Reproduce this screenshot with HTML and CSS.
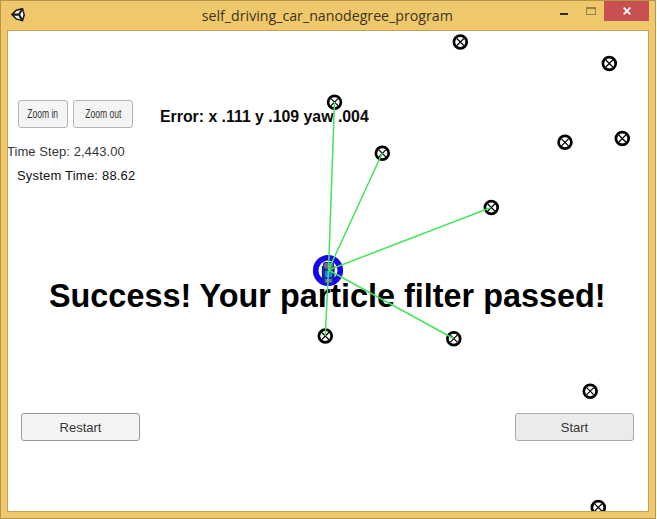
FILE: index.html
```html
<!DOCTYPE html>
<html lang="en">
<head>
<meta charset="utf-8">
<title>self_driving_car_nanodegree_program</title>
<link rel="stylesheet" href="styles.css">
</head>
<body>
<div class="window">
  <header class="titlebar">
    <svg class="logo" width="16" height="16" viewBox="0 0 16 16">
      <path d="M.8 7.5 5.8 2.6 13 .8 15 8 13 14.6 5.8 12.4Z" fill="#1c1b1b"/>
      <path d="M4.2 6.5 6.5 4 10.6 3 8.5 6.5Z" fill="#eee"/>
      <path d="M4.2 8.7 8.5 8.7 10.6 12.4 6.5 11.2Z" fill="#eee"/>
      <path d="M10.2 7.6 12.4 3.8 13.4 7.6 12.4 11.6Z" fill="#fff"/>
    </svg>
    <h1 class="title"><span>self_driving_car_nanodegree_program</span></h1>
    <div class="controls">
      <span class="minimize"></span>
      <span class="maximize"></span>
      <span class="close"><svg width="8" height="8" viewBox="0 0 8 8"><path d="M.7.7 7.3 7.3M7.3.7.7 7.3" stroke="#fff" stroke-width="1.8"/></svg></span>
    </div>
  </header>
  <main class="view">
    <div class="hud">
      <div class="top-row">
        <button class="btn zoom-in"><span>Zoom in</span></button>
        <button class="btn zoom-out"><span>Zoom out</span></button>
        <p class="error"><span>Error: x .111 y .109 yaw .004</span></p>
      </div>
      <p class="time-step">Time Step: 2,443.00</p>
      <p class="system-time">System Time: 88.62</p>
      <p class="success"><span>Success! Your particle filter passed!</span></p>
      <div class="bottom-row">
        <button class="btn wide">Restart</button>
        <button class="btn wide pressed">Start</button>
      </div>
    </div>
    <svg class="scene" width="640" height="480" viewBox="8 31 640 480">
      <defs>
        <g id="mark">
          <circle r="6.4" fill="none" stroke="#000" stroke-width="2.7"/>
          <path d="M-3.5-3.5 3.5 3.5M3.5-3.5-3.5 3.5" stroke="#000" stroke-width="1.2"/>
        </g>
      </defs>
      <use href="#mark" x="460.3" y="42"/>
      <use href="#mark" x="609.3" y="63.5"/>
      <use href="#mark" x="565" y="142.3"/>
      <use href="#mark" x="622.3" y="138.5"/>
      <use href="#mark" x="334.5" y="102.2"/>
      <use href="#mark" x="382.3" y="153.3"/>
      <use href="#mark" x="491.3" y="207.5"/>
      <use href="#mark" x="325.3" y="336"/>
      <use href="#mark" x="453.8" y="338.7"/>
      <use href="#mark" x="590.2" y="391.2"/>
      <use href="#mark" x="598.3" y="507.5"/>
      <ellipse cx="328" cy="270.5" rx="12.3" ry="12.8" fill="#fff" stroke="#1705ee" stroke-width="5.6"/>
      <rect x="323" y="262" width="11" height="21" rx="2" fill="#1727bd"/>
      <path d="M322.5 266V279M334 266V279" stroke="#172060" stroke-width="1.3"/>
      <rect x="324" y="263" width="9" height="5.5" rx="2" fill="#67716d"/>
      <rect x="325" y="271" width="7" height="6" fill="#1687de"/>
      <rect x="325" y="279" width="7" height="3.5" fill="#68798a"/>
      <path d="M334.5 102 328.5 270 382.3 153M328.5 270 491 207.5M328.5 270 453.5 338.5M328.5 270 325.3 336" fill="none" stroke="#43e45b" stroke-width="1.5"/>
    </svg>
  </main>
</div>
</body>
</html>
```
FILE: styles.css
```css
* { box-sizing: border-box; }
body { margin: 0; background: #fff; font-family: "Liberation Sans", Arial, sans-serif; overflow: hidden; }
h1, p { margin: 0; font-weight: normal; }
.window { width: 656px; height: 519px; border: 1px solid #b7944c; background: #efc86c; }
.titlebar { height: 29px; padding: 0 6px 0 9px; display: flex; align-items: flex-start; justify-content: space-between; }
.logo { margin-top: 6px; width: 16px; }
.title { width: 252px; margin: 4px 0 0 69px; display: flex; justify-content: center; font: 15.3px/21px "Open Sans", sans-serif; color: #3d3420; white-space: nowrap; }
.title span { transform: scaleX(.928); }
.controls { display: flex; }
.minimize { width: 8px; height: 2px; margin: 12px 18px 0 0; background: #31291a; }
.maximize { width: 10px; height: 8px; margin: 6px 8px 0 0; border: 1px solid #99804a; border-top-width: 2px; }
.close { width: 45px; height: 20px; display: grid; place-items: center; background: #c95050; }
.view { position: relative; width: 642px; height: 482px; margin-left: 6px; border: 1px solid #bea35e; background: #fff; overflow: hidden; }
.hud { display: flex; flex-direction: column; height: 480px; white-space: nowrap; }
.btn { display: flex; align-items: center; justify-content: center; height: 28px; padding: 0; border: 1px solid #b5b5b5; border-radius: 3px; background: #f4f4f4; color: #363636; font: 13px "Liberation Sans", Arial, sans-serif; }
.top-row { display: flex; margin: 69px 0 0 10px; }
.zoom-in { width: 50px; }
.zoom-out { width: 60px; margin-left: 5px; }
.zoom-in span, .zoom-out span { font-size: 12px; transform: scaleX(.71); }
.error { margin-left: 27px; padding-top: 7px; font-size: 16px; line-height: 20px; font-weight: bold; color: #0a0a0a; }
.error span { display: inline-block; transform: scaleX(.99); transform-origin: 0 50%; }
.time-step { margin: 14px 0 0 -1px; font-size: 13px; line-height: 20px; letter-spacing: .06px; color: #373737; }
.system-time { margin: 4px 0 0 9px; font-size: 13px; line-height: 20px; letter-spacing: .2px; color: #111; }
.success { margin: 90px 0 0 41px; font-size: 33px; line-height: 40px; font-weight: bold; color: #000; }
.success span { display: inline-block; transform: scaleX(.981); transform-origin: 0 50%; }
.bottom-row { display: flex; justify-content: space-between; margin: 97px 14px 0 13px; }
.wide { width: 119px; border-color: #999; }
.pressed { background: #ebebeb; border-color: #aaa; }
.scene { position: absolute; left: 0; top: 0; }
```
